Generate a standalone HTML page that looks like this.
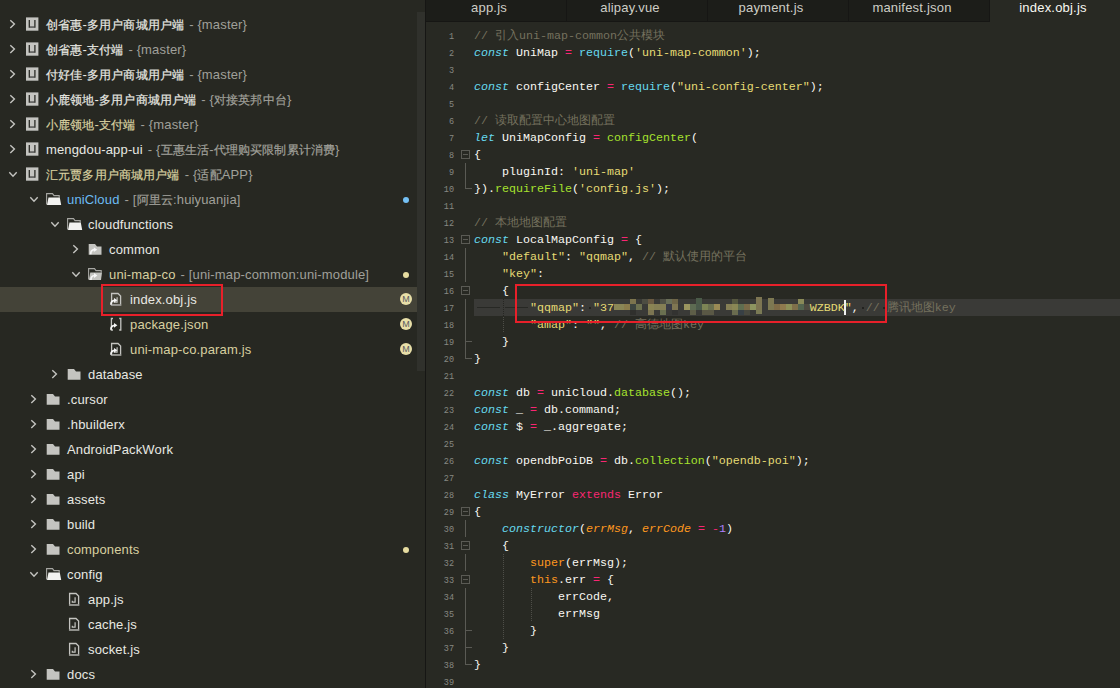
<!DOCTYPE html>
<html><head><meta charset="utf-8"><style>
html,body{margin:0;padding:0;width:1120px;height:688px;overflow:hidden;background:#282923;}
body{position:relative;font-family:"Liberation Sans",sans-serif;}
#sb{position:absolute;left:0;top:0;width:425px;height:688px;background:#272822;overflow:hidden}
.row{position:absolute;left:0;width:417px;height:25px}
.lbl{position:absolute;top:0;white-space:nowrap;font-size:13px;line-height:25px;letter-spacing:0.15px}
#thumb{position:absolute;left:417px;top:12px;width:8px;height:359px;background:#30312c}
#div{position:absolute;left:425px;top:0;width:1px;height:688px;background:#161614}
#tabbar{position:absolute;left:426px;top:0;width:694px;height:21px;background:#1c1d19;border-bottom:1px solid #161614}
.tab{position:absolute;top:0;width:126px;padding-right:14px;height:21px;text-align:center;font-size:13px;line-height:15px;color:#cecec6;white-space:nowrap;letter-spacing:0.2px}
.tab.act{background:#282923;height:22px;color:#f8f8f2}
.tsep{position:absolute;top:0;width:1px;height:21px;background:#161614}
#ed{position:absolute;left:426px;top:22px;width:694px;height:666px;background:#282923}
.ln{position:absolute;left:426px;width:28px;text-align:right;font:8.5px/17px "Liberation Mono",monospace;color:#878882;height:17px}
.cl{position:absolute;left:474px;white-space:pre;font:11.67px/17px "Liberation Mono",monospace;color:#f8f8f2;height:17px}
#cur{position:absolute;left:474px;top:299px;width:646px;height:17px;background:#3a3a37}
.rbox{position:absolute;border:2px solid #e8202a;box-sizing:border-box}
</style></head><body>
<div id="sb">
<div class="row" style="top:12px;"><svg width="60" height="25" style="position:absolute;left:0px;top:0" viewBox="0 0 60 25"><path d="M10.3 8.3 L14.4 12.1 L10.3 15.9" fill="none" stroke="#c4c4c0" stroke-width="1.4"/><rect x="26" y="5.4" width="12.4" height="13.3" fill="#c4c4c0"/><path d="M29.3 8 V15.2 H34.9 V8" fill="none" stroke="#2a2b26" stroke-width="1.3"/><rect x="29.9" y="14.4" width="4.4" height="1.2" fill="#777"/></svg><div class="lbl" style="left:46px"><span style="color:#e8e8e2"><span style="font-size:12px;-webkit-text-stroke:0.2px currentColor">创省惠</span>-<span style="font-size:12px;-webkit-text-stroke:0.2px currentColor">多用户商城用户端</span></span><span style="color:#a0a09a;padding-left:5px">-&nbsp;{master}</span></div></div><div class="row" style="top:37px;"><svg width="60" height="25" style="position:absolute;left:0px;top:0" viewBox="0 0 60 25"><path d="M10.3 8.3 L14.4 12.1 L10.3 15.9" fill="none" stroke="#c4c4c0" stroke-width="1.4"/><rect x="26" y="5.4" width="12.4" height="13.3" fill="#c4c4c0"/><path d="M29.3 8 V15.2 H34.9 V8" fill="none" stroke="#2a2b26" stroke-width="1.3"/><rect x="29.9" y="14.4" width="4.4" height="1.2" fill="#777"/></svg><div class="lbl" style="left:46px"><span style="color:#e8e8e2"><span style="font-size:12px;-webkit-text-stroke:0.2px currentColor">创省惠</span>-<span style="font-size:12px;-webkit-text-stroke:0.2px currentColor">支付端</span></span><span style="color:#a0a09a;padding-left:5px">-&nbsp;{master}</span></div></div><div class="row" style="top:62px;"><svg width="60" height="25" style="position:absolute;left:0px;top:0" viewBox="0 0 60 25"><path d="M10.3 8.3 L14.4 12.1 L10.3 15.9" fill="none" stroke="#c4c4c0" stroke-width="1.4"/><rect x="26" y="5.4" width="12.4" height="13.3" fill="#c4c4c0"/><path d="M29.3 8 V15.2 H34.9 V8" fill="none" stroke="#2a2b26" stroke-width="1.3"/><rect x="29.9" y="14.4" width="4.4" height="1.2" fill="#777"/></svg><div class="lbl" style="left:46px"><span style="color:#e8e8e2"><span style="font-size:12px;-webkit-text-stroke:0.2px currentColor">付好佳</span>-<span style="font-size:12px;-webkit-text-stroke:0.2px currentColor">多用户商城用户端</span></span><span style="color:#a0a09a;padding-left:5px">-&nbsp;{master}</span></div></div><div class="row" style="top:87px;"><svg width="60" height="25" style="position:absolute;left:0px;top:0" viewBox="0 0 60 25"><path d="M10.3 8.3 L14.4 12.1 L10.3 15.9" fill="none" stroke="#c4c4c0" stroke-width="1.4"/><rect x="26" y="5.4" width="12.4" height="13.3" fill="#c4c4c0"/><path d="M29.3 8 V15.2 H34.9 V8" fill="none" stroke="#2a2b26" stroke-width="1.3"/><rect x="29.9" y="14.4" width="4.4" height="1.2" fill="#777"/></svg><div class="lbl" style="left:46px"><span style="color:#e8e8e2"><span style="font-size:12px;-webkit-text-stroke:0.2px currentColor">小鹿领地</span>-<span style="font-size:12px;-webkit-text-stroke:0.2px currentColor">多用户商城用户端</span></span><span style="color:#a0a09a;padding-left:5px">-&nbsp;{<span style="font-size:12px;-webkit-text-stroke:0.2px currentColor">对接英邦中台</span>}</span></div></div><div class="row" style="top:112px;"><svg width="60" height="25" style="position:absolute;left:0px;top:0" viewBox="0 0 60 25"><path d="M10.3 8.3 L14.4 12.1 L10.3 15.9" fill="none" stroke="#c4c4c0" stroke-width="1.4"/><rect x="26" y="5.4" width="12.4" height="13.3" fill="#c4c4c0"/><path d="M29.3 8 V15.2 H34.9 V8" fill="none" stroke="#2a2b26" stroke-width="1.3"/><rect x="29.9" y="14.4" width="4.4" height="1.2" fill="#777"/></svg><div class="lbl" style="left:46px"><span style="color:#d8d0a0"><span style="font-size:12px;-webkit-text-stroke:0.2px currentColor">小鹿领地</span>-<span style="font-size:12px;-webkit-text-stroke:0.2px currentColor">支付端</span></span><span style="color:#a0a09a;padding-left:5px">-&nbsp;{master}</span></div></div><div class="row" style="top:137px;"><svg width="60" height="25" style="position:absolute;left:0px;top:0" viewBox="0 0 60 25"><path d="M10.3 8.3 L14.4 12.1 L10.3 15.9" fill="none" stroke="#c4c4c0" stroke-width="1.4"/><rect x="26" y="5.4" width="12.4" height="13.3" fill="#c4c4c0"/><path d="M29.3 8 V15.2 H34.9 V8" fill="none" stroke="#2a2b26" stroke-width="1.3"/><rect x="29.9" y="14.4" width="4.4" height="1.2" fill="#777"/></svg><div class="lbl" style="left:46px"><span style="color:#e8e8e2">mengdou-app-ui</span><span style="color:#a0a09a;padding-left:5px">-&nbsp;{<span style="font-size:12px;-webkit-text-stroke:0.2px currentColor">互惠生活</span>-<span style="font-size:12px;-webkit-text-stroke:0.2px currentColor">代理购买限制累计消费</span>}</span></div></div><div class="row" style="top:162px;"><svg width="60" height="25" style="position:absolute;left:0px;top:0" viewBox="0 0 60 25"><path d="M9.3 10.3 L13 14.2 L16.7 10.3" fill="none" stroke="#c4c4c0" stroke-width="1.4"/><rect x="26" y="5.4" width="12.4" height="13.3" fill="#c4c4c0"/><path d="M29.3 8 V15.2 H34.9 V8" fill="none" stroke="#2a2b26" stroke-width="1.3"/><rect x="29.9" y="14.4" width="4.4" height="1.2" fill="#777"/></svg><div class="lbl" style="left:46px"><span style="color:#d8d0a0"><span style="font-size:12px;-webkit-text-stroke:0.2px currentColor">汇元贾多用户商城用户端</span></span><span style="color:#a0a09a;padding-left:5px">-&nbsp;{<span style="font-size:12px;-webkit-text-stroke:0.2px currentColor">适配</span>APP}</span></div></div><div class="row" style="top:187px;"><svg width="60" height="25" style="position:absolute;left:21px;top:0" viewBox="0 0 60 25"><path d="M9.3 10.3 L13 14.2 L16.7 10.3" fill="none" stroke="#c4c4c0" stroke-width="1.4"/><path d="M25.6 17.5 V6.6 H31.5 L33 8.6 H38.2 V10.5" fill="none" stroke="#a8a8a4" stroke-width="1.1"/><path d="M26 17.9 L27.5 10.4 H38.8 L40.2 17.9 Z" fill="#f2f2f0"/></svg><div class="lbl" style="left:67px"><span style="color:#6cbcf4">uniCloud</span><span style="color:#a0a09a;padding-left:5px">-&nbsp;[<span style="font-size:12px;-webkit-text-stroke:0.2px currentColor">阿里云</span>:huiyuanjia]</span></div><div style="position:absolute;left:403px;top:9.5px;width:6px;height:6px;border-radius:50%;background:#74c0f4"></div></div><div class="row" style="top:212px;"><svg width="60" height="25" style="position:absolute;left:42px;top:0" viewBox="0 0 60 25"><path d="M9.3 10.3 L13 14.2 L16.7 10.3" fill="none" stroke="#c4c4c0" stroke-width="1.4"/><path d="M25.6 17.5 V6.6 H31.5 L33 8.6 H38.2 V10.5" fill="none" stroke="#a8a8a4" stroke-width="1.1"/><path d="M26 17.9 L27.5 10.4 H38.8 L40.2 17.9 Z" fill="#f2f2f0"/></svg><div class="lbl" style="left:88px"><span style="color:#e8e8e2">cloudfunctions</span></div></div><div class="row" style="top:237px;"><svg width="60" height="25" style="position:absolute;left:63px;top:0" viewBox="0 0 60 25"><path d="M10.3 8.3 L14.4 12.1 L10.3 15.9" fill="none" stroke="#c4c4c0" stroke-width="1.4"/><path d="M25.7 6.9 H32 L34 9.6 H38.5 V17.8 H25.7 Z" fill="#c4c4c0"/><g transform="translate(0.8 -0.6)"><path d="M26.9 17.8 C26.9 14.9 28.2 13.4 30.6 13.3" fill="none" stroke="#f6f6f6" stroke-width="1.7"/><path d="M30.0 10.9 L33.4 13.3 L30.0 15.7 Z" fill="#f6f6f6"/></g></svg><div class="lbl" style="left:109px"><span style="color:#e8e8e2">common</span></div></div><div class="row" style="top:262px;"><svg width="60" height="25" style="position:absolute;left:63px;top:0" viewBox="0 0 60 25"><path d="M9.3 10.3 L13 14.2 L16.7 10.3" fill="none" stroke="#c4c4c0" stroke-width="1.4"/><path d="M25.6 17.5 V6.6 H31.5 L33 8.6 H38.2 V10.5" fill="none" stroke="#a8a8a4" stroke-width="1.1"/><path d="M25.8 17.9 L27.3 10.6 H39 L38 17.9 Z" fill="#c4c4c0"/><g transform="translate(1.0 0.2)"><path d="M26.9 17.8 C26.9 14.9 28.2 13.4 30.6 13.3" fill="none" stroke="#f6f6f6" stroke-width="1.7"/><path d="M30.0 10.9 L33.4 13.3 L30.0 15.7 Z" fill="#f6f6f6"/></g></svg><div class="lbl" style="left:109px"><span style="color:#d8d0a0">uni-map-co</span><span style="color:#a0a09a;padding-left:5px">-&nbsp;[uni-map-common:uni-module]</span></div><div style="position:absolute;left:403px;top:9.5px;width:6px;height:6px;border-radius:50%;background:#e6dca0"></div></div><div class="row" style="top:287px;background:#444338;"><svg width="60" height="25" style="position:absolute;left:84px;top:0" viewBox="0 0 60 25"><path d="M27.6 6.5 H34 L36.6 9 V18 H27.6 Z" fill="none" stroke="#c4c4c0" stroke-width="1.3"/><rect x="27" y="17.4" width="10.2" height="1.3" fill="#8a8a86"/><path d="M33.1 10.3 V15.2 H30.3 V13.8" fill="none" stroke="#c4c4c0" stroke-width="1.2"/><g transform="translate(0 0)"><path d="M26.9 17.8 C26.9 14.9 28.2 13.4 30.6 13.3" fill="none" stroke="#f6f6f6" stroke-width="1.7"/><path d="M30.0 10.9 L33.4 13.3 L30.0 15.7 Z" fill="#f6f6f6"/></g></svg><div class="lbl" style="left:130px"><span style="color:#e8e8e2">index.obj.js</span></div><div style="position:absolute;left:400px;top:6px;width:12px;height:12px;border-radius:50%;background:#e8dfa8;color:#5a5a60;font:9px/12px 'Liberation Sans',sans-serif;text-align:center">M</div></div><div class="row" style="top:312px;"><svg width="60" height="25" style="position:absolute;left:84px;top:0" viewBox="0 0 60 25"><path d="M29 6.5 H27.4 V18 H29 M35.2 6.5 H36.8 V18 H35.2" fill="none" stroke="#c4c4c0" stroke-width="1.3"/><g transform="translate(0 0)"><path d="M26.9 17.8 C26.9 14.9 28.2 13.4 30.6 13.3" fill="none" stroke="#f6f6f6" stroke-width="1.7"/><path d="M30.0 10.9 L33.4 13.3 L30.0 15.7 Z" fill="#f6f6f6"/></g></svg><div class="lbl" style="left:130px"><span style="color:#d8d0a0">package.json</span></div><div style="position:absolute;left:400px;top:6px;width:12px;height:12px;border-radius:50%;background:#e8dfa8;color:#5a5a60;font:9px/12px 'Liberation Sans',sans-serif;text-align:center">M</div></div><div class="row" style="top:337px;"><svg width="60" height="25" style="position:absolute;left:84px;top:0" viewBox="0 0 60 25"><path d="M27.6 6.5 H34 L36.6 9 V18 H27.6 Z" fill="none" stroke="#c4c4c0" stroke-width="1.3"/><rect x="27" y="17.4" width="10.2" height="1.3" fill="#8a8a86"/><path d="M33.1 10.3 V15.2 H30.3 V13.8" fill="none" stroke="#c4c4c0" stroke-width="1.2"/><g transform="translate(0 0)"><path d="M26.9 17.8 C26.9 14.9 28.2 13.4 30.6 13.3" fill="none" stroke="#f6f6f6" stroke-width="1.7"/><path d="M30.0 10.9 L33.4 13.3 L30.0 15.7 Z" fill="#f6f6f6"/></g></svg><div class="lbl" style="left:130px"><span style="color:#d8d0a0">uni-map-co.param.js</span></div><div style="position:absolute;left:400px;top:6px;width:12px;height:12px;border-radius:50%;background:#e8dfa8;color:#5a5a60;font:9px/12px 'Liberation Sans',sans-serif;text-align:center">M</div></div><div class="row" style="top:362px;"><svg width="60" height="25" style="position:absolute;left:42px;top:0" viewBox="0 0 60 25"><path d="M10.3 8.3 L14.4 12.1 L10.3 15.9" fill="none" stroke="#c4c4c0" stroke-width="1.4"/><path d="M25.7 6.9 H32 L34 9.6 H38.5 V17.8 H25.7 Z" fill="#c4c4c0"/></svg><div class="lbl" style="left:88px"><span style="color:#e8e8e2">database</span></div></div><div class="row" style="top:387px;"><svg width="60" height="25" style="position:absolute;left:21px;top:0" viewBox="0 0 60 25"><path d="M10.3 8.3 L14.4 12.1 L10.3 15.9" fill="none" stroke="#c4c4c0" stroke-width="1.4"/><path d="M25.7 6.9 H32 L34 9.6 H38.5 V17.8 H25.7 Z" fill="#c4c4c0"/></svg><div class="lbl" style="left:67px"><span style="color:#e8e8e2">.cursor</span></div></div><div class="row" style="top:412px;"><svg width="60" height="25" style="position:absolute;left:21px;top:0" viewBox="0 0 60 25"><path d="M10.3 8.3 L14.4 12.1 L10.3 15.9" fill="none" stroke="#c4c4c0" stroke-width="1.4"/><path d="M25.7 6.9 H32 L34 9.6 H38.5 V17.8 H25.7 Z" fill="#c4c4c0"/></svg><div class="lbl" style="left:67px"><span style="color:#e8e8e2">.hbuilderx</span></div></div><div class="row" style="top:437px;"><svg width="60" height="25" style="position:absolute;left:21px;top:0" viewBox="0 0 60 25"><path d="M10.3 8.3 L14.4 12.1 L10.3 15.9" fill="none" stroke="#c4c4c0" stroke-width="1.4"/><path d="M25.7 6.9 H32 L34 9.6 H38.5 V17.8 H25.7 Z" fill="#c4c4c0"/></svg><div class="lbl" style="left:67px"><span style="color:#e8e8e2">AndroidPackWork</span></div></div><div class="row" style="top:462px;"><svg width="60" height="25" style="position:absolute;left:21px;top:0" viewBox="0 0 60 25"><path d="M10.3 8.3 L14.4 12.1 L10.3 15.9" fill="none" stroke="#c4c4c0" stroke-width="1.4"/><path d="M25.7 6.9 H32 L34 9.6 H38.5 V17.8 H25.7 Z" fill="#c4c4c0"/></svg><div class="lbl" style="left:67px"><span style="color:#e8e8e2">api</span></div></div><div class="row" style="top:487px;"><svg width="60" height="25" style="position:absolute;left:21px;top:0" viewBox="0 0 60 25"><path d="M10.3 8.3 L14.4 12.1 L10.3 15.9" fill="none" stroke="#c4c4c0" stroke-width="1.4"/><path d="M25.7 6.9 H32 L34 9.6 H38.5 V17.8 H25.7 Z" fill="#c4c4c0"/></svg><div class="lbl" style="left:67px"><span style="color:#e8e8e2">assets</span></div></div><div class="row" style="top:512px;"><svg width="60" height="25" style="position:absolute;left:21px;top:0" viewBox="0 0 60 25"><path d="M10.3 8.3 L14.4 12.1 L10.3 15.9" fill="none" stroke="#c4c4c0" stroke-width="1.4"/><path d="M25.7 6.9 H32 L34 9.6 H38.5 V17.8 H25.7 Z" fill="#c4c4c0"/></svg><div class="lbl" style="left:67px"><span style="color:#e8e8e2">build</span></div></div><div class="row" style="top:537px;"><svg width="60" height="25" style="position:absolute;left:21px;top:0" viewBox="0 0 60 25"><path d="M10.3 8.3 L14.4 12.1 L10.3 15.9" fill="none" stroke="#c4c4c0" stroke-width="1.4"/><path d="M25.7 6.9 H32 L34 9.6 H38.5 V17.8 H25.7 Z" fill="#c4c4c0"/></svg><div class="lbl" style="left:67px"><span style="color:#d8d0a0">components</span></div><div style="position:absolute;left:403px;top:9.5px;width:6px;height:6px;border-radius:50%;background:#e6dca0"></div></div><div class="row" style="top:562px;"><svg width="60" height="25" style="position:absolute;left:21px;top:0" viewBox="0 0 60 25"><path d="M9.3 10.3 L13 14.2 L16.7 10.3" fill="none" stroke="#c4c4c0" stroke-width="1.4"/><path d="M25.6 17.5 V6.6 H31.5 L33 8.6 H38.2 V10.5" fill="none" stroke="#a8a8a4" stroke-width="1.1"/><path d="M26 17.9 L27.5 10.4 H38.8 L40.2 17.9 Z" fill="#f2f2f0"/></svg><div class="lbl" style="left:67px"><span style="color:#e8e8e2">config</span></div></div><div class="row" style="top:587px;"><svg width="60" height="25" style="position:absolute;left:42px;top:0" viewBox="0 0 60 25"><path d="M27.6 6.5 H34 L36.6 9 V18 H27.6 Z" fill="none" stroke="#c4c4c0" stroke-width="1.3"/><rect x="27" y="17.4" width="10.2" height="1.3" fill="#8a8a86"/><path d="M33.1 10.3 V15.2 H30.3 V13.8" fill="none" stroke="#c4c4c0" stroke-width="1.2"/></svg><div class="lbl" style="left:88px"><span style="color:#e8e8e2">app.js</span></div></div><div class="row" style="top:612px;"><svg width="60" height="25" style="position:absolute;left:42px;top:0" viewBox="0 0 60 25"><path d="M27.6 6.5 H34 L36.6 9 V18 H27.6 Z" fill="none" stroke="#c4c4c0" stroke-width="1.3"/><rect x="27" y="17.4" width="10.2" height="1.3" fill="#8a8a86"/><path d="M33.1 10.3 V15.2 H30.3 V13.8" fill="none" stroke="#c4c4c0" stroke-width="1.2"/></svg><div class="lbl" style="left:88px"><span style="color:#e8e8e2">cache.js</span></div></div><div class="row" style="top:637px;"><svg width="60" height="25" style="position:absolute;left:42px;top:0" viewBox="0 0 60 25"><path d="M27.6 6.5 H34 L36.6 9 V18 H27.6 Z" fill="none" stroke="#c4c4c0" stroke-width="1.3"/><rect x="27" y="17.4" width="10.2" height="1.3" fill="#8a8a86"/><path d="M33.1 10.3 V15.2 H30.3 V13.8" fill="none" stroke="#c4c4c0" stroke-width="1.2"/></svg><div class="lbl" style="left:88px"><span style="color:#e8e8e2">socket.js</span></div></div><div class="row" style="top:662px;"><svg width="60" height="25" style="position:absolute;left:21px;top:0" viewBox="0 0 60 25"><path d="M10.3 8.3 L14.4 12.1 L10.3 15.9" fill="none" stroke="#c4c4c0" stroke-width="1.4"/><path d="M25.7 6.9 H32 L34 9.6 H38.5 V17.8 H25.7 Z" fill="#c4c4c0"/></svg><div class="lbl" style="left:67px"><span style="color:#e8e8e2">docs</span></div></div>
<div id="thumb"></div>
<div class="rbox" style="left:101px;top:284px;width:122px;height:32px"></div>
</div>
<div id="div"></div>
<div id="tabbar"></div>
<div class="tab" style="left:426px">app.js</div><div class="tsep" style="left:566px"></div><div class="tab" style="left:567px">alipay.vue</div><div class="tsep" style="left:707px"></div><div class="tab" style="left:708px">payment.js</div><div class="tsep" style="left:848px"></div><div class="tab" style="left:849px">manifest.json</div><div class="tsep" style="left:989px"></div><div class="tab act" style="left:990px">index.obj.js</div>
<div id="ed"></div>
<div id="cur"></div>
<div style="position:absolute;left:461px;top:150px;width:7px;height:7px;border:1px solid #5a5a54"></div><div style="position:absolute;left:463px;top:154px;width:5px;height:1px;background:#5a5a54"></div><div style="position:absolute;left:461px;top:235px;width:7px;height:7px;border:1px solid #5a5a54"></div><div style="position:absolute;left:463px;top:239px;width:5px;height:1px;background:#5a5a54"></div><div style="position:absolute;left:461px;top:286px;width:7px;height:7px;border:1px solid #5a5a54"></div><div style="position:absolute;left:463px;top:290px;width:5px;height:1px;background:#5a5a54"></div><div style="position:absolute;left:461px;top:507px;width:7px;height:7px;border:1px solid #5a5a54"></div><div style="position:absolute;left:463px;top:511px;width:5px;height:1px;background:#5a5a54"></div><div style="position:absolute;left:461px;top:541px;width:7px;height:7px;border:1px solid #5a5a54"></div><div style="position:absolute;left:463px;top:545px;width:5px;height:1px;background:#5a5a54"></div><div style="position:absolute;left:461px;top:575px;width:7px;height:7px;border:1px solid #5a5a54"></div><div style="position:absolute;left:463px;top:579px;width:5px;height:1px;background:#5a5a54"></div><div style="position:absolute;left:465px;top:163px;width:1px;height:17px;background:#5a5a54"></div><div style="position:absolute;left:465px;top:180px;width:1px;height:9px;background:#5a5a54"></div><div style="position:absolute;left:465px;top:188px;width:7px;height:1px;background:#5a5a54"></div><div style="position:absolute;left:465px;top:248px;width:1px;height:17px;background:#5a5a54"></div><div style="position:absolute;left:465px;top:265px;width:1px;height:17px;background:#5a5a54"></div><div style="position:absolute;left:465px;top:299px;width:1px;height:17px;background:#5a5a54"></div><div style="position:absolute;left:465px;top:316px;width:1px;height:17px;background:#5a5a54"></div><div style="position:absolute;left:465px;top:333px;width:1px;height:17px;background:#5a5a54"></div><div style="position:absolute;left:465px;top:341px;width:7px;height:1px;background:#5a5a54"></div><div style="position:absolute;left:465px;top:350px;width:1px;height:9px;background:#5a5a54"></div><div style="position:absolute;left:465px;top:358px;width:7px;height:1px;background:#5a5a54"></div><div style="position:absolute;left:465px;top:520px;width:1px;height:17px;background:#5a5a54"></div><div style="position:absolute;left:465px;top:554px;width:1px;height:17px;background:#5a5a54"></div><div style="position:absolute;left:465px;top:588px;width:1px;height:17px;background:#5a5a54"></div><div style="position:absolute;left:465px;top:605px;width:1px;height:17px;background:#5a5a54"></div><div style="position:absolute;left:465px;top:622px;width:1px;height:17px;background:#5a5a54"></div><div style="position:absolute;left:465px;top:639px;width:1px;height:17px;background:#5a5a54"></div><div style="position:absolute;left:465px;top:630px;width:7px;height:1px;background:#5a5a54"></div><div style="position:absolute;left:465px;top:647px;width:7px;height:1px;background:#5a5a54"></div><div style="position:absolute;left:465px;top:656px;width:1px;height:9px;background:#5a5a54"></div><div style="position:absolute;left:465px;top:664px;width:7px;height:1px;background:#5a5a54"></div><div style="position:absolute;left:503px;top:299px;width:1px;height:34px;background:repeating-linear-gradient(to bottom,#4e4e48 0 1px,transparent 1px 2px)"></div><div style="position:absolute;left:503px;top:554px;width:1px;height:85px;background:repeating-linear-gradient(to bottom,#4e4e48 0 1px,transparent 1px 2px)"></div><div style="position:absolute;left:531px;top:588px;width:1px;height:34px;background:repeating-linear-gradient(to bottom,#4e4e48 0 1px,transparent 1px 2px)"></div><div style="position:absolute;left:477px;top:307px;width:23px;height:1px;background:#272824"></div><div style="position:absolute;left:505px;top:307px;width:23px;height:1px;background:#272824"></div><div style="position:absolute;left:503px;top:299px;width:1px;height:17px;background:repeating-linear-gradient(to bottom,#262622 0 1px,transparent 1px 2px)"></div><div style="position:absolute;left:589px;top:307px;width:2px;height:2px;background:#22221f"></div><div style="position:absolute;left:862px;top:307px;width:2px;height:2px;background:#22221f"></div><div style="position:absolute;left:883px;top:307px;width:2px;height:2px;background:#22221f"></div><div style="position:absolute;left:844px;top:300px;width:2px;height:15px;background:#f0f0f0"></div><svg style="position:absolute;left:600px;top:296px;filter:blur(0.4px)" width="220" height="22" viewBox="0 0 220 22" shape-rendering="crispEdges"><rect x="14.0" y="7.8" width="10.3" height="6.2" fill="#8a8656"/><rect x="24.3" y="7.8" width="5.8" height="6.2" fill="#8a7c4c"/><rect x="30.1" y="7.8" width="5.8" height="6.2" fill="#3d4540"/><rect x="35.9" y="7.8" width="6.2" height="6.2" fill="#6d7150"/><rect x="47.9" y="7.8" width="5.9" height="6.2" fill="#8a8454"/><rect x="53.8" y="7.8" width="12.0" height="6.2" fill="#857f55"/><rect x="65.8" y="7.8" width="5.8" height="6.2" fill="#3a3b45"/><rect x="71.6" y="7.8" width="6.3" height="6.2" fill="#7f7652"/><rect x="84.1" y="7.8" width="5.8" height="6.2" fill="#9a955f"/><rect x="89.9" y="7.8" width="6.3" height="6.2" fill="#5d6b52"/><rect x="96.2" y="7.8" width="5.8" height="6.2" fill="#4b5a4b"/><rect x="102.0" y="7.8" width="6.0" height="6.2" fill="#7c8455"/><rect x="108.0" y="7.8" width="5.8" height="6.2" fill="#6a7050"/><rect x="113.8" y="7.8" width="5.9" height="6.2" fill="#9a8a55"/><rect x="126.1" y="7.8" width="5.9" height="6.2" fill="#857f55"/><rect x="132.0" y="7.8" width="5.9" height="6.2" fill="#8a8755"/><rect x="137.9" y="7.8" width="6.4" height="6.2" fill="#5f6d50"/><rect x="144.3" y="7.8" width="5.9" height="6.2" fill="#7a6a48"/><rect x="150.2" y="7.8" width="5.9" height="6.2" fill="#8d9560"/><rect x="156.1" y="7.8" width="5.9" height="6.2" fill="#7d7552"/><rect x="167.9" y="7.8" width="5.9" height="6.2" fill="#7d7852"/><rect x="173.8" y="7.8" width="5.9" height="6.2" fill="#7f6c48"/><rect x="179.7" y="7.8" width="6.3" height="6.2" fill="#8f7a4e"/><rect x="186.0" y="7.8" width="5.9" height="6.2" fill="#8d9058"/><rect x="191.9" y="7.8" width="5.9" height="6.2" fill="#7f704a"/><rect x="197.8" y="7.8" width="5.9" height="6.2" fill="#546550"/><rect x="203.7" y="7.8" width="5.9" height="6.2" fill="#4f4a40"/><rect x="30.1" y="2.9" width="5.8" height="4.9" fill="#7c744e"/><rect x="42.1" y="2.9" width="5.8" height="4.9" fill="#4d4d42"/><rect x="47.9" y="2.9" width="5.9" height="4.9" fill="#6a5a42"/><rect x="60.0" y="2.9" width="5.8" height="4.9" fill="#505045"/><rect x="65.8" y="2.9" width="5.8" height="4.9" fill="#6a6f58"/><rect x="71.6" y="2.9" width="6.3" height="4.9" fill="#6e6547"/><rect x="96.2" y="2.0" width="5.8" height="5.8" fill="#4a5a48"/><rect x="132.0" y="2.9" width="5.9" height="4.9" fill="#55573f"/><rect x="156.1" y="1.0" width="5.9" height="6.8" fill="#7d7552"/><rect x="167.9" y="2.0" width="5.9" height="5.8" fill="#7d7852"/><rect x="197.8" y="2.9" width="5.9" height="4.9" fill="#8a8a58"/><rect x="30.1" y="14.0" width="5.8" height="5.0" fill="#30302d"/><rect x="47.9" y="14.0" width="5.9" height="5.0" fill="#7c7552"/><rect x="60.0" y="14.0" width="5.8" height="5.0" fill="#6a7050"/><rect x="71.6" y="14.0" width="6.3" height="5.0" fill="#333331"/><rect x="89.9" y="14.0" width="6.3" height="5.0" fill="#5e5e48"/><rect x="102.0" y="14.0" width="11.8" height="5.0" fill="#5a5845"/><rect x="132.0" y="14.0" width="5.9" height="5.0" fill="#6a6c4f"/><rect x="137.9" y="14.0" width="6.4" height="5.0" fill="#384045"/><rect x="144.3" y="14.0" width="5.9" height="5.0" fill="#48483e"/><rect x="156.1" y="14.0" width="5.9" height="4.0" fill="#7a7a55"/></svg>
<div class="ln" style="top:29px">1</div><div class="cl" style="top:28px"><span style="color:#75715e">// <span style="font-size:12px">引入</span>uni-map-common<span style="font-size:12px">公共模块</span></span></div><div class="ln" style="top:46px">2</div><div class="cl" style="top:45px"><span style="color:#66d9ef;font-style:italic">const</span><span style="color:#f8f8f2"> UniMap </span><span style="color:#f92672">=</span> <span style="color:#66d9ef">require</span><span style="color:#f8f8f2">(</span><span style="color:#e6db74">&#x27;uni-map-common&#x27;</span><span style="color:#f8f8f2">);</span></div><div class="ln" style="top:63px">3</div><div class="ln" style="top:80px">4</div><div class="cl" style="top:79px"><span style="color:#66d9ef;font-style:italic">const</span><span style="color:#f8f8f2"> configCenter </span><span style="color:#f92672">=</span> <span style="color:#66d9ef">require</span><span style="color:#f8f8f2">(</span><span style="color:#e6db74">&quot;uni-config-center&quot;</span><span style="color:#f8f8f2">);</span></div><div class="ln" style="top:97px">5</div><div class="ln" style="top:114px">6</div><div class="cl" style="top:113px"><span style="color:#75715e">// <span style="font-size:12px">读取配置中心地图配置</span></span></div><div class="ln" style="top:131px">7</div><div class="cl" style="top:130px"><span style="color:#66d9ef;font-style:italic">let</span><span style="color:#f8f8f2"> UniMapConfig </span><span style="color:#f92672">=</span> <span style="color:#a6e22e">configCenter</span><span style="color:#f8f8f2">(</span></div><div class="ln" style="top:148px">8</div><div class="cl" style="top:147px"><span style="color:#f8f8f2">{</span></div><div class="ln" style="top:165px">9</div><div class="cl" style="top:164px"><span style="color:#f8f8f2">    pluginId: </span><span style="color:#e6db74">&#x27;uni-map&#x27;</span></div><div class="ln" style="top:182px">10</div><div class="cl" style="top:181px"><span style="color:#f8f8f2">}).</span><span style="color:#a6e22e">requireFile</span><span style="color:#f8f8f2">(</span><span style="color:#e6db74">&#x27;config.js&#x27;</span><span style="color:#f8f8f2">);</span></div><div class="ln" style="top:199px">11</div><div class="ln" style="top:216px">12</div><div class="cl" style="top:215px"><span style="color:#75715e">// <span style="font-size:12px">本地地图配置</span></span></div><div class="ln" style="top:233px">13</div><div class="cl" style="top:232px"><span style="color:#66d9ef;font-style:italic">const</span><span style="color:#f8f8f2"> LocalMapConfig </span><span style="color:#f92672">=</span><span style="color:#f8f8f2"> {</span></div><div class="ln" style="top:250px">14</div><div class="cl" style="top:249px"><span style="color:#f8f8f2">    </span><span style="color:#e6db74">&quot;default&quot;</span><span style="color:#f8f8f2">: </span><span style="color:#e6db74">&quot;qqmap&quot;</span><span style="color:#f8f8f2">, </span><span style="color:#75715e">// <span style="font-size:12px">默认使用的平台</span></span></div><div class="ln" style="top:267px">15</div><div class="cl" style="top:266px"><span style="color:#f8f8f2">    </span><span style="color:#e6db74">&quot;key&quot;</span><span style="color:#f8f8f2">:</span></div><div class="ln" style="top:284px">16</div><div class="cl" style="top:283px"><span style="color:#f8f8f2">    {</span></div><div class="ln" style="top:301px">17</div><div class="cl" style="top:300px"><span style="color:#f8f8f2">        </span><span style="color:#e6db74">&quot;qqmap&quot;</span><span style="color:#f8f8f2">: </span><span style="color:#e6db74">&quot;37</span><span style="color:#f8f8f2">                            </span><span style="color:#e6db74">WZBDK</span><span style="color:#e6db74">&quot;</span><span style="color:#f8f8f2">, </span><span style="color:#75715e">// <span style="font-size:12px">腾讯地图</span>key</span></div><div class="ln" style="top:318px">18</div><div class="cl" style="top:317px"><span style="color:#f8f8f2">        </span><span style="color:#e6db74">&quot;amap&quot;</span><span style="color:#f8f8f2">: </span><span style="color:#e6db74">&quot;&quot;</span><span style="color:#f8f8f2">, </span><span style="color:#75715e">// <span style="font-size:12px">高德地图</span>key</span></div><div class="ln" style="top:335px">19</div><div class="cl" style="top:334px"><span style="color:#f8f8f2">    }</span></div><div class="ln" style="top:352px">20</div><div class="cl" style="top:351px"><span style="color:#f8f8f2">}</span></div><div class="ln" style="top:369px">21</div><div class="ln" style="top:386px">22</div><div class="cl" style="top:385px"><span style="color:#66d9ef;font-style:italic">const</span><span style="color:#f8f8f2"> db </span><span style="color:#f92672">=</span><span style="color:#f8f8f2"> uniCloud.</span><span style="color:#a6e22e">database</span><span style="color:#f8f8f2">();</span></div><div class="ln" style="top:403px">23</div><div class="cl" style="top:402px"><span style="color:#66d9ef;font-style:italic">const</span><span style="color:#f8f8f2"> _ </span><span style="color:#f92672">=</span><span style="color:#f8f8f2"> db.command;</span></div><div class="ln" style="top:420px">24</div><div class="cl" style="top:419px"><span style="color:#66d9ef;font-style:italic">const</span><span style="color:#f8f8f2"> $ </span><span style="color:#f92672">=</span><span style="color:#f8f8f2"> _.aggregate;</span></div><div class="ln" style="top:437px">25</div><div class="ln" style="top:454px">26</div><div class="cl" style="top:453px"><span style="color:#66d9ef;font-style:italic">const</span><span style="color:#f8f8f2"> opendbPoiDB </span><span style="color:#f92672">=</span><span style="color:#f8f8f2"> db.</span><span style="color:#a6e22e">collection</span><span style="color:#f8f8f2">(</span><span style="color:#e6db74">&quot;opendb-poi&quot;</span><span style="color:#f8f8f2">);</span></div><div class="ln" style="top:471px">27</div><div class="ln" style="top:488px">28</div><div class="cl" style="top:487px"><span style="color:#66d9ef;font-style:italic">class</span><span style="color:#f8f8f2"> MyError </span><span style="color:#f92672">extends</span><span style="color:#f8f8f2"> Error</span></div><div class="ln" style="top:505px">29</div><div class="cl" style="top:504px"><span style="color:#f8f8f2">{</span></div><div class="ln" style="top:522px">30</div><div class="cl" style="top:521px"><span style="color:#f8f8f2">    </span><span style="color:#66d9ef;font-style:italic">constructor</span><span style="color:#f8f8f2">(</span><span style="color:#fd971f;font-style:italic">errMsg</span><span style="color:#f8f8f2">, </span><span style="color:#fd971f;font-style:italic">errCode</span><span style="color:#f8f8f2"> </span><span style="color:#f92672">=</span><span style="color:#f8f8f2"> </span><span style="color:#f92672">-</span><span style="color:#ae81ff">1</span><span style="color:#f8f8f2">)</span></div><div class="ln" style="top:539px">31</div><div class="cl" style="top:538px"><span style="color:#f8f8f2">    {</span></div><div class="ln" style="top:556px">32</div><div class="cl" style="top:555px"><span style="color:#f8f8f2">        </span><span style="color:#fd971f">super</span><span style="color:#f8f8f2">(errMsg);</span></div><div class="ln" style="top:573px">33</div><div class="cl" style="top:572px"><span style="color:#f8f8f2">        </span><span style="color:#fd971f">this</span><span style="color:#f8f8f2">.err </span><span style="color:#f92672">=</span><span style="color:#f8f8f2"> {</span></div><div class="ln" style="top:590px">34</div><div class="cl" style="top:589px"><span style="color:#f8f8f2">            errCode,</span></div><div class="ln" style="top:607px">35</div><div class="cl" style="top:606px"><span style="color:#f8f8f2">            errMsg</span></div><div class="ln" style="top:624px">36</div><div class="cl" style="top:623px"><span style="color:#f8f8f2">        }</span></div><div class="ln" style="top:641px">37</div><div class="cl" style="top:640px"><span style="color:#f8f8f2">    }</span></div><div class="ln" style="top:658px">38</div><div class="cl" style="top:657px"><span style="color:#f8f8f2">}</span></div><div class="ln" style="top:675px">39</div>
<div class="rbox" style="left:515px;top:284px;width:372px;height:39px"></div>
</body></html>
